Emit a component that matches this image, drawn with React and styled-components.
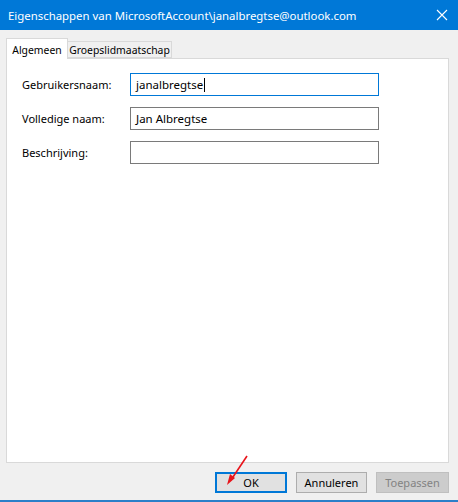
import React from "react";
import styled, { createGlobalStyle } from "styled-components";

const GlobalStyle = createGlobalStyle`
  html, body {
    margin: 0;
    padding: 0;
    background: #f0f0f0;
  }
  * {
    box-sizing: border-box;
  }
`;

const Window = styled.div`
  position: relative;
  width: 458px;
  height: 502px;
  display: flex;
  flex-direction: column;
  background: #f0f0f0;
  border-bottom: 2px solid #2b7fc9;
  font-family: "Noto Sans", "Segoe UI", sans-serif;
  font-size: 11px;
  color: #000;
  overflow: hidden;
`;

const TitleBar = styled.div`
  height: 30px;
  flex: none;
  display: flex;
  align-items: center;
  justify-content: space-between;
  padding: 0 8px 0 8px;
  background: #0078d7;
  color: #fff;
  font-size: 11.4px;
`;

const CloseButton = styled.div`
  width: 12px;
  height: 12px;
  margin-right: 2px;
  display: flex;
`;

const Body = styled.div`
  flex: 1;
  display: flex;
  flex-direction: column;
  padding: 8px 9px 0 6px;
`;

const TabStrip = styled.div`
  height: 20px;
  display: flex;
  align-items: flex-end;
  position: relative;
  z-index: 1;
`;

const Tab = styled.div`
  height: ${(p) => (p.$active ? "21px" : "17px")};
  margin-bottom: ${(p) => (p.$active ? "-1px" : "0")};
  padding-top: ${(p) => (p.$active ? "1px" : "0")};
  display: flex;
  align-items: center;
  justify-content: center;
  font-size: 10.4px;
  background: ${(p) => (p.$active ? "#fff" : "#f0f0f0")};
  border: 1px solid #d9d9d9;
  border-bottom: ${(p) => (p.$active ? "none" : "1px solid #d9d9d9")};
  border-left: ${(p) => (p.$active ? "1px solid #d9d9d9" : "none")};
  width: ${(p) => p.$width}px;
  white-space: nowrap;
`;

const Panel = styled.div`
  height: 405px;
  background: #fff;
  border: 1px solid #d9d9d9;
  padding: 14px 0 0 15px;
  display: flex;
  flex-direction: column;
  gap: 11px;
`;

const FieldRow = styled.div`
  display: flex;
  align-items: center;
`;

const Label = styled.label`
  width: 108px;
  flex: none;
`;

const Input = styled.div`
  width: 249px;
  height: 23px;
  display: flex;
  align-items: center;
  padding: 0 0 0 5px;
  font-size: 11.5px;
  border: 1px solid ${(p) => (p.$focused ? "#0078d7" : "#7a7a7a")};
  background: #fff;
`;

const Caret = styled.span`
  display: inline-block;
  width: 1px;
  height: 14px;
  background: #000;
  margin-left: 1px;
`;

const Footer = styled.div`
  display: flex;
  justify-content: flex-end;
  gap: 9px;
  padding-top: 9px;
`;

const Button = styled.div`
  width: ${(p) => p.$width}px;
  height: 21px;
  display: flex;
  align-items: center;
  justify-content: center;
  background: ${(p) => (p.$disabled ? "#cccccc" : "#e1e1e1")};
  color: ${(p) => (p.$disabled ? "#838383" : "#000")};
  border: ${(p) => (p.$default ? "2px solid #0078d7" : p.$disabled ? "1px solid #bfbfbf" : "1px solid #adadad")};
`;

const Arrow = styled.svg`
  position: absolute;
  left: 222px;
  top: 452px;
  width: 30px;
  height: 36px;
  pointer-events: none;
`;

export default function App() {
  return (
    <>
      <GlobalStyle />
      <Window>
        <TitleBar>
          <span>Eigenschappen van MicrosoftAccount\janalbregtse@outlook.com</span>
          <CloseButton>
            <svg width="12" height="12" viewBox="0 0 12 12">
              <path d="M1 1L11 11M11 1L1 11" stroke="#fff" strokeWidth="1.1" />
            </svg>
          </CloseButton>
        </TitleBar>
        <Body>
          <TabStrip>
            <Tab $active $width={62}>Algemeen</Tab>
            <Tab $width={104}>Groepslidmaatschap</Tab>
          </TabStrip>
          <Panel>
            <FieldRow>
              <Label>Gebruikersnaam:</Label>
              <Input $focused>
                janalbregtse
                <Caret />
              </Input>
            </FieldRow>
            <FieldRow>
              <Label>Volledige naam:</Label>
              <Input>Jan Albregtse</Input>
            </FieldRow>
            <FieldRow>
              <Label>Beschrijving:</Label>
              <Input />
            </FieldRow>
          </Panel>
          <Footer>
            <Button $default $width={72}>OK</Button>
            <Button $width={71}>Annuleren</Button>
            <Button $disabled $width={73}>Toepassen</Button>
          </Footer>
        </Body>
        <Arrow viewBox="0 0 30 36">
          <path d="M25 4L9 28" stroke="#e8141b" strokeWidth="1.6" />
          <path d="M5 33L8 22L13 26Z" fill="#e8141b" />
        </Arrow>
      </Window>
    </>
  );
}
